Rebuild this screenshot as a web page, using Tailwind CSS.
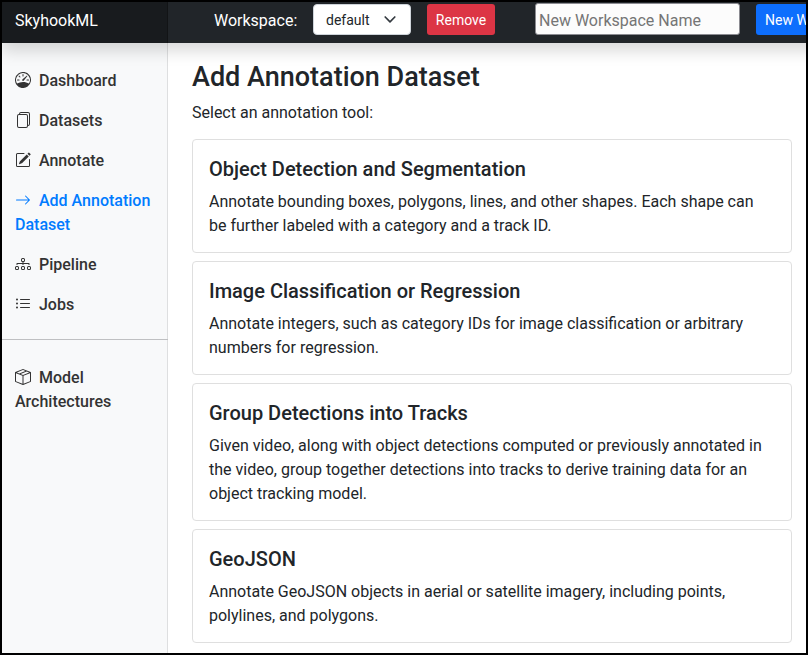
<!DOCTYPE html>
<html lang="en">
<head>
<meta charset="utf-8">
<title>SkyhookML</title>
<script src="https://cdn.jsdelivr.net/npm/@tailwindcss/browser@4"></script>
</head>
<body class="w-[808px] h-[655px] overflow-hidden bg-black p-[2px] font-[Roboto,sans-serif] text-base text-[#212529]">
<div class="flex flex-col w-[804px] h-[651px] overflow-hidden bg-white">
  <header class="relative z-10 flex shrink-0 w-[860px] h-[41px] bg-[#212529] text-white shadow-[0_8px_16px_rgba(0,0,0,0.15)]">
    <div class="w-[166px] shrink-0 bg-black/25 pl-[13px] pt-[7px] leading-6 shadow-[inset_-1px_0_0_rgba(0,0,0,0.25)]">SkyhookML</div>
    <div class="flex shrink-0 items-start pl-[46px] pt-[2px] whitespace-nowrap">
      <span class="w-[99px] pt-[5px] leading-6">Workspace:</span>
      <div class="flex items-center justify-between w-[98px] h-[31px] rounded-[4px] border border-[#ced4da] bg-white pl-3 pr-[12px] text-sm text-[#212529]">
        <span>default</span>
        <svg class="w-4 h-3" viewBox="0 0 16 12" fill="none" stroke="#343a40" stroke-width="1.7" stroke-linecap="round" stroke-linejoin="round"><path d="M3.2 3 8 7.8 12.8 3"/></svg>
      </div>
      <button class="ml-4 w-[68px] h-[31px] rounded-[3px] bg-[#dc3545] text-sm text-white">Remove</button>
      <input class="ml-10 -mt-px w-[205px] h-[32px] rounded-[3px] border border-[#8b8b91] bg-[#fcfcfc] px-[3px] pt-[2px] text-base text-black placeholder:text-[#757575]" placeholder="New Workspace Name">
      <button class="ml-4 px-[9px] h-[31px] rounded-[3px] bg-[#0d6efd] text-sm text-white">New Workspace</button>
    </div>
  </header>
  <div class="flex grow min-h-0">
    <nav class="w-[166px] shrink-0 bg-[#f8f9fa] pt-[18px] font-medium leading-6 text-[#333] shadow-[inset_-1px_0_0_rgba(0,0,0,0.1)]">
      <ul>
        <li class="px-[13px] py-2"><svg class="inline-block w-4 h-4 mr-1 align-[-2px]" viewBox="0 0 16 16" fill="currentColor"><path d="M8 2a.5.5 0 0 1 .5.5V4a.5.5 0 0 1-1 0V2.5A.5.5 0 0 1 8 2zM3.732 3.732a.5.5 0 0 1 .707 0l.915.914a.5.5 0 1 1-.708.708l-.914-.915a.5.5 0 0 1 0-.707zM2 8a.5.5 0 0 1 .5-.5h1.586a.5.5 0 0 1 0 1H2.5A.5.5 0 0 1 2 8zm9.5 0a.5.5 0 0 1 .5-.5h1.5a.5.5 0 0 1 0 1H12a.5.5 0 0 1-.5-.5zm.754-4.246a.389.389 0 0 0-.527-.02L7.547 7.31A.91.91 0 1 0 8.85 8.569l3.434-4.297a.389.389 0 0 0-.029-.518z"/><path fill-rule="evenodd" d="M6.664 15.889A8 8 0 1 1 9.336.11a8 8 0 0 1-2.672 15.78zm-4.665-4.283A11.945 11.945 0 0 1 8 10c2.186 0 4.236.585 6.001 1.606a7 7 0 1 0-12.002 0z"/></svg> Dashboard</li>
        <li class="px-[13px] py-2"><svg class="inline-block w-4 h-4 mr-1 align-[-2px]" viewBox="0 0 16 16" fill="currentColor"><path d="M13 0H6a2 2 0 0 0-2 2 2 2 0 0 0-2 2v10a2 2 0 0 0 2 2h7a2 2 0 0 0 2-2 2 2 0 0 0 2-2V2a2 2 0 0 0-2-2zm0 13V4a2 2 0 0 0-2-2H5a1 1 0 0 1 1-1h7a1 1 0 0 1 1 1v10a1 1 0 0 1-1 1zM3 4a1 1 0 0 1 1-1h7a1 1 0 0 1 1 1v10a1 1 0 0 1-1 1H4a1 1 0 0 1-1-1V4z"/></svg> Datasets</li>
        <li class="px-[13px] py-2"><svg class="inline-block w-4 h-4 mr-1 align-[-2px]" viewBox="0 0 16 16" fill="currentColor"><path d="M15.502 1.94a.5.5 0 0 1 0 .706L14.459 3.69l-2-2L13.502.646a.5.5 0 0 1 .707 0l1.293 1.293zm-1.75 2.456-2-2L4.939 9.21a.5.5 0 0 0-.121.196l-.805 2.414a.25.25 0 0 0 .316.316l2.414-.805a.5.5 0 0 0 .196-.12l6.813-6.814z"/><path fill-rule="evenodd" d="M1 13.5A1.5 1.5 0 0 0 2.500 15h11a1.500 1.500 0 0 0 1.500-1.500v-6a.5.5 0 0 0-1 0v6a.5.5 0 0 1-.5.5h-11a.5.5 0 0 1-.5-.5v-11a.5.5 0 0 1 .5-.5H9a.5.5 0 0 0 0-1H2.500A1.500 1.500 0 0 0 1 2.500v11z"/></svg> Annotate</li>
        <li class="px-[13px] py-2 text-[#007bff]"><svg class="inline-block w-4 h-4 mr-1 align-[-2px]" viewBox="0 0 16 16" fill="currentColor"><path fill-rule="evenodd" d="M1 8a.5.5 0 0 1 .5-.5h11.793l-3.147-3.146a.5.5 0 0 1 .708-.708l4 4a.5.5 0 0 1 0 .708l-4 4a.5.5 0 0 1-.708-.708L13.293 8.500H1.500A.5.5 0 0 1 1 8z"/></svg> Add Annotation Dataset</li>
        <li class="px-[13px] py-2"><svg class="inline-block w-4 h-4 mr-1 align-[-2px]" viewBox="0 0 16 16" fill="currentColor"><path fill-rule="evenodd" d="M6 3.500A1.500 1.500 0 0 1 7.500 2h1A1.500 1.500 0 0 1 10 3.500v1A1.500 1.500 0 0 1 8.500 6v1H14a.5.5 0 0 1 .5.5v1a.5.5 0 0 1-1 0V8h-5v.5a.5.5 0 0 1-1 0V8h-5v.5a.5.5 0 0 1-1 0v-1A.5.5 0 0 1 2 7h5.500V6A1.500 1.500 0 0 1 6 4.500v-1zM8.500 5a.5.5 0 0 0 .5-.5v-1a.5.5 0 0 0-.5-.5h-1a.5.5 0 0 0-.5.5v1a.5.5 0 0 0 .5.5h1zM0 11.500A1.500 1.500 0 0 1 1.500 10h1A1.500 1.500 0 0 1 4 11.500v1A1.500 1.500 0 0 1 2.500 14h-1A1.500 1.500 0 0 1 0 12.500v-1zm1.500-.5a.5.5 0 0 0-.5.5v1a.5.5 0 0 0 .5.5h1a.5.5 0 0 0 .5-.5v-1a.5.5 0 0 0-.5-.5h-1zm4.500.5A1.500 1.500 0 0 1 7.500 10h1a1.500 1.500 0 0 1 1.500 1.500v1A1.500 1.500 0 0 1 8.500 14h-1A1.500 1.500 0 0 1 6 12.500v-1zm1.500-.5a.5.5 0 0 0-.5.5v1a.5.5 0 0 0 .5.5h1a.5.5 0 0 0 .5-.5v-1a.5.5 0 0 0-.5-.5h-1zm4.500.5a1.500 1.500 0 0 1 1.500-1.500h1a1.500 1.500 0 0 1 1.500 1.500v1a1.500 1.500 0 0 1-1.500 1.500h-1a1.500 1.500 0 0 1-1.500-1.500v-1zm1.500-.5a.5.5 0 0 0-.5.5v1a.5.5 0 0 0 .5.5h1a.5.5 0 0 0 .5-.5v-1a.5.5 0 0 0-.5-.5h-1z"/></svg> Pipeline</li>
        <li class="px-[13px] py-2"><svg class="inline-block w-4 h-4 mr-1 align-[-2px]" viewBox="0 0 16 16" fill="currentColor"><path fill-rule="evenodd" d="M5 11.500a.5.5 0 0 1 .5-.5h9a.5.5 0 0 1 0 1h-9a.5.5 0 0 1-.5-.5zm0-4a.5.5 0 0 1 .5-.5h9a.5.5 0 0 1 0 1h-9a.5.5 0 0 1-.5-.5zm0-4a.5.5 0 0 1 .5-.5h9a.5.5 0 0 1 0 1h-9a.5.5 0 0 1-.5-.5zm-3 1a1 1 0 1 0 0-2 1 1 0 0 0 0 2zm0 4a1 1 0 1 0 0-2 1 1 0 0 0 0 2zm0 4a1 1 0 1 0 0-2 1 1 0 0 0 0 2z"/></svg> Jobs</li>
      </ul>
      <hr class="mt-[14px] mb-[18px] h-px border-0 bg-[#bfc0c2]">
      <ul>
        <li class="px-[13px] py-2"><svg class="inline-block w-4 h-4 mr-1 align-[-2px]" viewBox="0 0 16 16" fill="currentColor"><path d="M8.186 1.113a.5.5 0 0 0-.372 0L1.846 3.500l2.404.961L10.404 2l-2.218-.887zm3.564 1.426L5.596 5 8 5.961 14.154 3.500l-2.404-.961zm3.250 1.700-6.500 2.600v7.922l6.500-2.600V4.240zM7.500 14.762V6.838L1 4.239v7.923l6.500 2.600zM7.443.184a1.500 1.500 0 0 1 1.114 0l7.129 2.852A.5.5 0 0 1 16 3.500v8.662a1 1 0 0 1-.629.928l-7.185 2.874a.5.5 0 0 1-.372 0L.630 13.090a1 1 0 0 1-.630-.928V3.500a.5.5 0 0 1 .314-.464L7.443.184z"/></svg> Model Architectures</li>
      </ul>
    </nav>
    <main class="grow pl-6 pr-[14px] pt-[18px]">
      <h1 class="text-[27px] font-medium leading-[33px]">Add Annotation Dataset</h1>
      <p class="mt-[7px] leading-6">Select an annotation tool:</p>
      <div class="mt-[14px] flex flex-col gap-2 leading-6">
        <section class="rounded-[4px] border border-[#dfdfdf] px-4 pt-[17px] pb-[14px]">
          <h2 class="mb-[9px] text-xl font-medium leading-6">Object Detection and Segmentation</h2>
          <p class="pr-2">Annotate bounding boxes, polygons, lines, and other shapes. Each shape can be further labeled with a category and a track ID.</p>
        </section>
        <section class="rounded-[4px] border border-[#dfdfdf] px-4 pt-[17px] pb-[14px]">
          <h2 class="mb-[9px] text-xl font-medium leading-6">Image Classification or Regression</h2>
          <p class="pr-2">Annotate integers, such as category IDs for image classification or arbitrary numbers for regression.</p>
        </section>
        <section class="rounded-[4px] border border-[#dfdfdf] px-4 pt-[17px] pb-[14px]">
          <h2 class="mb-[9px] text-xl font-medium leading-6">Group Detections into Tracks</h2>
          <p class="pr-2">Given video, along with object detections computed or previously annotated in the video, group together detections into tracks to derive training data for an object tracking model.</p>
        </section>
        <section class="rounded-[4px] border border-[#dfdfdf] px-4 pt-[17px] pb-[14px]">
          <h2 class="mb-[9px] text-xl font-medium leading-6">GeoJSON</h2>
          <p class="pr-2">Annotate GeoJSON objects in aerial or satellite imagery, including points, polylines, and polygons.</p>
        </section>
      </div>
    </main>
  </div>
</div>
</body>
</html>
